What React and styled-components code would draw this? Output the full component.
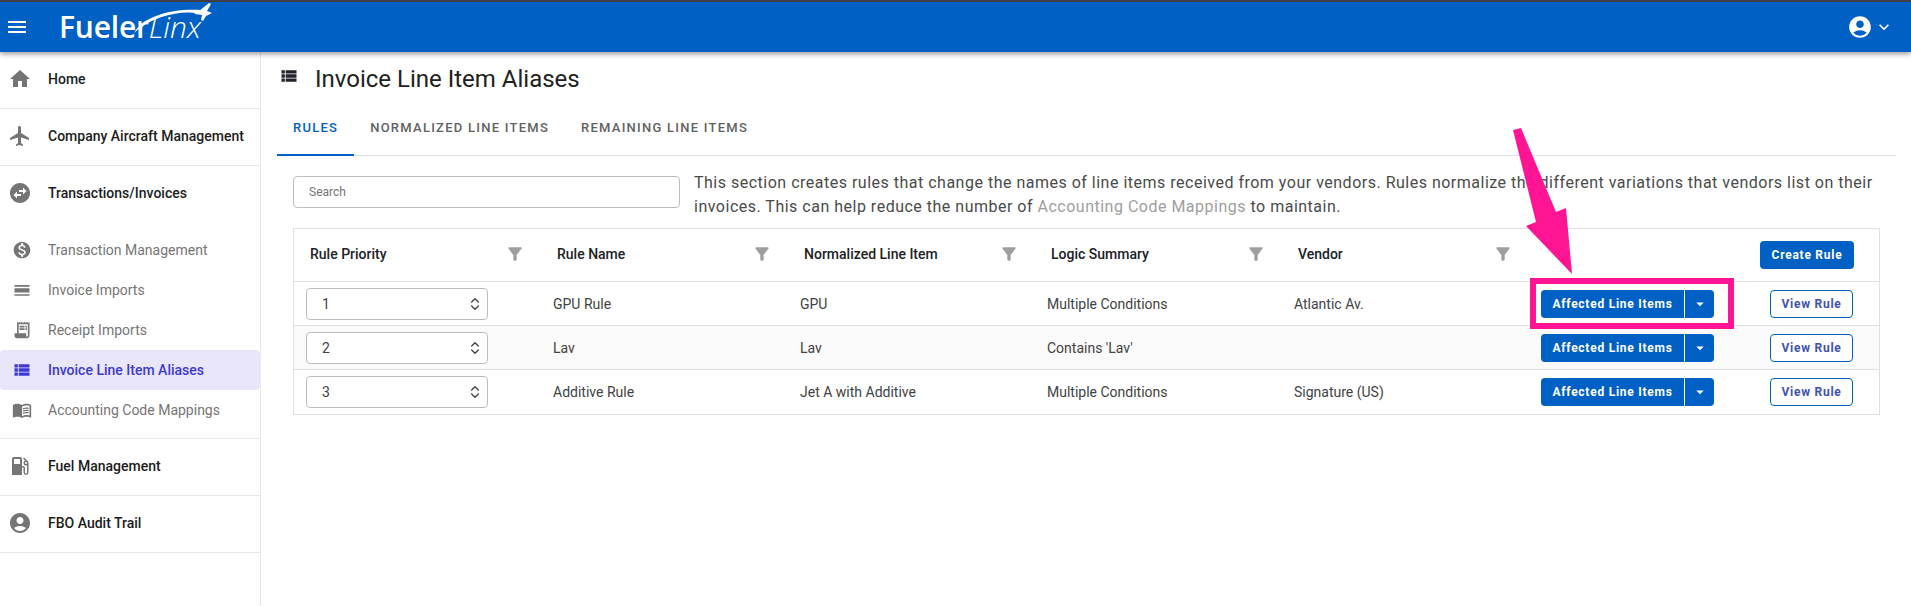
import React from 'react'
import styled, { createGlobalStyle } from 'styled-components'
import {
  MdMenu, MdHome, MdFlight, MdSwapHorizontalCircle, MdMonetizationOn, MdCalendarViewDay,
  MdReceiptLong, MdViewList, MdMenuBook, MdLocalGasStation, MdAccountCircle,
  MdKeyboardArrowDown, MdArrowDropDown, MdFilterAlt,
} from 'react-icons/md'
import { LuChevronsUpDown } from 'react-icons/lu'

const GlobalStyle = createGlobalStyle`
  html, body { margin: 0; padding: 0; background: #fff; overflow: hidden; }
  body { font-family: Roboto, "Liberation Sans", sans-serif; color: #212121; }
  * { box-sizing: border-box; }
`

const rules = [
  { priority: 1, name: 'GPU Rule', item: 'GPU', logic: 'Multiple Conditions', vendor: 'Atlantic Av.' },
  { priority: 2, name: 'Lav', item: 'Lav', logic: "Contains 'Lav'", vendor: '' },
  { priority: 3, name: 'Additive Rule', item: 'Jet A with Additive', logic: 'Multiple Conditions', vendor: 'Signature (US)' },
]

const columns = ['Rule Priority', 'Rule Name', 'Normalized Line Item', 'Logic Summary', 'Vendor']

const subItems = [
  { label: 'Transaction Management', Icon: MdMonetizationOn },
  { label: 'Invoice Imports', Icon: MdCalendarViewDay },
  { label: 'Receipt Imports', Icon: MdReceiptLong },
  { label: 'Invoice Line Item Aliases', Icon: MdViewList, active: true },
  { label: 'Accounting Code Mappings', Icon: MdMenuBook },
]

function App() {
  return (
    <Page>
      <GlobalStyle />
      <Header>
        <MenuButton><MdMenu size={24} /></MenuButton>
        <Logo>
          <LogoBold>Fueler</LogoBold><LogoThin>Linx</LogoThin>
          <Swoosh width="80" height="34" viewBox="0 0 80 34">
            <path d="M1 31 C10 14 40 6 68 8 C72 9 73 11 71 14 C60 7 24 10 1 31 Z" fill="#fff" />
            <path d="M60 9 L66 9 L76 1 L78 2 L74 9 L79 11 L73 14 L70 19 L68 18 L69 13 L62 12 Z" fill="#fff" />
          </Swoosh>
        </Logo>
        <UserMenu>
          <MdAccountCircle size={26} />
          <MdKeyboardArrowDown size={20} />
        </UserMenu>
      </Header>

      <Body>
        <Sidebar>
          <NavSection>
            <NavItem><MdHome size={24} /><span>Home</span></NavItem>
          </NavSection>
          <NavSection>
            <NavItem><MdFlight size={24} /><span>Company Aircraft Management</span></NavItem>
          </NavSection>
          <NavSection>
            <NavItem><MdSwapHorizontalCircle size={24} /><span>Transactions/Invoices</span></NavItem>
            <SubList>
              {subItems.map(({ label, Icon, active }) => (
                <SubItem key={label} $active={active}><Icon size={20} /><span>{label}</span></SubItem>
              ))}
            </SubList>
          </NavSection>
          <NavSection>
            <NavItem><MdLocalGasStation size={24} /><span>Fuel Management</span></NavItem>
          </NavSection>
          <NavSection>
            <NavItem><MdAccountCircle size={24} /><span>FBO Audit Trail</span></NavItem>
          </NavSection>
        </Sidebar>

        <Main>
          <TitleRow>
            <MdViewList size={20} />
            <Title>Invoice Line Item Aliases</Title>
          </TitleRow>

          <Tabs>
            <Tab $active>Rules</Tab>
            <Tab>Normalized Line Items</Tab>
            <Tab>Remaining Line Items</Tab>
          </Tabs>

          <Content>
            <Intro>
              <SearchInput placeholder="Search" />
              <Description>
                This section creates rules that change the names of line items received from your vendors. Rules normalize the different variations that vendors list on their invoices. This can help reduce the number of <DocLink>Accounting Code Mappings</DocLink> to maintain.
              </Description>
            </Intro>

            <Table>
              <HeaderRow>
                {columns.map((col) => (
                  <HeaderCell key={col}>
                    <span>{col}</span>
                    <FilterIcon><MdFilterAlt size={20} /></FilterIcon>
                  </HeaderCell>
                ))}
                <ActionCell $end><PrimaryButton>Create Rule</PrimaryButton></ActionCell>
              </HeaderRow>
              {rules.map((rule, i) => (
                <Row key={rule.priority} $striped={i === 1}>
                  <PriorityCell>
                    <NumberBox>
                      <NumberInput defaultValue={rule.priority} />
                      <LuChevronsUpDown size={16} />
                    </NumberBox>
                  </PriorityCell>
                  <Cell>{rule.name}</Cell>
                  <Cell>{rule.item}</Cell>
                  <Cell>{rule.logic}</Cell>
                  <Cell>{rule.vendor}</Cell>
                  <ActionCell>
                    <SplitButton>
                      <SplitMain>Affected Line Items</SplitMain>
                      <SplitToggle><MdArrowDropDown size={18} /></SplitToggle>
                      {i === 0 && <Highlight />}
                    </SplitButton>
                    <OutlineButton>View Rule</OutlineButton>
                  </ActionCell>
                </Row>
              ))}
            </Table>
          </Content>
        </Main>
      </Body>

      <Arrow width="70" height="146" viewBox="0 0 70 146">
        <path d="M5 2 L13 0 L48 84 L58 80 L64 146 L18 98 L28 94 Z" fill="#ff1493" />
      </Arrow>
    </Page>
  )
}

export default App

const Page = styled.div`
  position: relative;
  width: 1911px;
  height: 606px;
  overflow: hidden;
`

const Header = styled.header`
  position: relative;
  z-index: 2;
  height: 52px;
  display: flex;
  align-items: center;
  background: #0060c3;
  border-top: 2px solid #3c3f44;
  color: #fff;
  box-shadow: 0 2px 5px rgba(0, 0, 0, 0.4);
`

const MenuButton = styled.div`
  width: 34px;
  margin-left: 5px;
  display: flex;
`

const Logo = styled.div`
  position: relative;
  margin-left: 20px;
  display: flex;
  align-items: baseline;
  line-height: 1;
`

const LogoBold = styled.span`
  font-family: "Open Sans", sans-serif;
  font-size: 30px;
  font-weight: 600;
  letter-spacing: -0.2px;
`

const LogoThin = styled.span`
  font-family: "Open Sans", sans-serif;
  font-size: 30px;
  font-style: italic;
  font-weight: 300;
`

const Swoosh = styled.svg`
  position: absolute;
  left: 74px;
  top: -10px;
`

const UserMenu = styled.div`
  margin-left: auto;
  margin-right: 17px;
  display: flex;
  align-items: center;
  gap: 1px;
`

const Body = styled.div`
  display: flex;
  height: 554px;
`

const Sidebar = styled.nav`
  width: 261px;
  flex: none;
  border-right: 1px solid #e8e8e8;
`

const NavSection = styled.div`
  border-bottom: 1px solid #e8e8e8;
`

const NavItem = styled.div`
  height: 56px;
  display: flex;
  align-items: center;
  gap: 16px;
  padding: 0 0 3px 8px;
  font-size: 14px;
  font-weight: 500;
  color: #1c1c1c;
  svg { color: #757575; flex: none; }
`

const SubList = styled.div`
  padding: 8px 0;
`

const SubItem = styled.div`
  height: 40px;
  display: flex;
  align-items: center;
  gap: 16px;
  padding-left: 12px;
  font-size: 14px;
  border-radius: 4px;
  color: ${(p) => (p.$active ? '#3f39d2' : '#757575')};
  background: ${(p) => (p.$active ? '#e8e6f8' : 'transparent')};
  font-weight: ${(p) => (p.$active ? 500 : 400)};
  svg { flex: none; }
`

const Main = styled.main`
  flex: 1;
  padding: 0 15px 0 16px;
`

const TitleRow = styled.div`
  height: 56px;
  padding: 0 0 2px 2px;
  display: flex;
  align-items: center;
  gap: 16px;
  svg { margin-top: -6px; color: #22222e; }
`

const Title = styled.h1`
  margin: 0;
  font-size: 24px;
  font-weight: 400;
  color: #212121;
`

const Tabs = styled.div`
  display: flex;
  height: 48px;
  border-bottom: 1px solid #e0e0e0;
`

const Tab = styled.div`
  height: 48px;
  padding: 0 16px 8px;
  display: flex;
  align-items: center;
  font-size: 13px;
  font-weight: 500;
  letter-spacing: 1.25px;
  text-transform: uppercase;
  color: ${(p) => (p.$active ? '#0060c3' : '#616161')};
  border-bottom: 2px solid ${(p) => (p.$active ? '#0060c3' : 'transparent')};
`

const Content = styled.div`
  padding: 15px 16px 0;
`

const Intro = styled.div`
  display: flex;
  gap: 14px;
  margin-bottom: 9px;
`

const SearchInput = styled.input`
  width: 387px;
  height: 32px;
  flex: none;
  margin-top: 5px;
  padding: 0 15px;
  border: 1px solid #bdbdbd;
  border-radius: 4px;
  font-family: Roboto, sans-serif;
  font-size: 12px;
  outline: none;
  &::placeholder { color: #757575; }
`

const Description = styled.p`
  margin: 0;
  font-size: 16px;
  line-height: 24px;
  letter-spacing: 0.5px;
  color: #4a4a4a;
`

const DocLink = styled.span`
  color: #9e9e9e;
`

const Table = styled.div`
  width: 1587px;
  border: 1px solid #e0e0e0;
`

const HeaderRow = styled.div`
  display: grid;
  grid-template-columns: repeat(5, 247px) 1fr;
  height: 53px;
  border-bottom: 1px solid #e0e0e0;
`

const HeaderCell = styled.div`
  display: flex;
  align-items: center;
  justify-content: space-between;
  padding: 0 16px 2px;
  font-size: 14px;
  font-weight: 500;
  color: #212121;
`

const FilterIcon = styled.span`
  display: flex;
  color: #9e9e9e;
`

const Row = styled.div`
  display: grid;
  grid-template-columns: repeat(5, 247px) 1fr;
  height: 44px;
  background: ${(p) => (p.$striped ? '#fafafa' : '#fff')};
  border-bottom: 1px solid #e0e0e0;
  &:last-child { border-bottom: 0; }
`

const Cell = styled.div`
  display: flex;
  align-items: center;
  padding-left: 12px;
  font-size: 14px;
  color: #424242;
`

const PriorityCell = styled(Cell)`
  padding-left: 12px;
`

const NumberBox = styled.div`
  width: 182px;
  height: 32px;
  display: flex;
  align-items: center;
  justify-content: space-between;
  padding: 0 4px 0 0;
  background: #fff;
  border: 1px solid #bdbdbd;
  border-radius: 4px;
  svg { color: #424242; }
`

const NumberInput = styled.input`
  width: 120px;
  border: 0;
  padding-left: 15px;
  background: transparent;
  font-family: Roboto, sans-serif;
  font-size: 14px;
  color: #424242;
  outline: none;
`

const ActionCell = styled.div`
  display: flex;
  align-items: center;
  justify-content: ${(p) => (p.$end ? 'flex-end' : 'space-between')};
  padding: ${(p) => (p.$end ? '0 25px 0 0' : '0 26px 0 12px')};
`

const buttonText = `
  font-family: Roboto, sans-serif;
  font-size: 12px;
  font-weight: 700;
  letter-spacing: 0.75px;
`

const PrimaryButton = styled.button`
  ${buttonText}
  width: 94px;
  height: 28px;
  padding: 0;
  background: #0060c3;
  border: 0;
  border-radius: 4px;
  color: #fff;
`

const SplitButton = styled.div`
  position: relative;
  display: flex;
  height: 28px;
`

const SplitMain = styled.button`
  ${buttonText}
  width: 144px;
  padding: 0;
  background: #0060c3;
  border: 0;
  border-right: 1px solid #fff;
  border-radius: 4px 0 0 4px;
  color: #fff;
`

const SplitToggle = styled.button`
  width: 29px;
  padding: 0;
  display: flex;
  align-items: center;
  justify-content: center;
  background: #0060c3;
  border: 0;
  border-radius: 0 4px 4px 0;
  color: #fff;
`

const OutlineButton = styled.button`
  ${buttonText}
  width: 83px;
  height: 28px;
  padding: 0;
  background: #fff;
  border: 1px solid #0060c3;
  border-radius: 4px;
  color: #3f51b5;
`

const Highlight = styled.div`
  position: absolute;
  top: -12px;
  left: -11px;
  right: -20px;
  bottom: -11px;
  border: 6px solid #ff1493;
  pointer-events: none;
`

const Arrow = styled.svg`
  position: absolute;
  left: 1508px;
  top: 128px;
  z-index: 3;
`
